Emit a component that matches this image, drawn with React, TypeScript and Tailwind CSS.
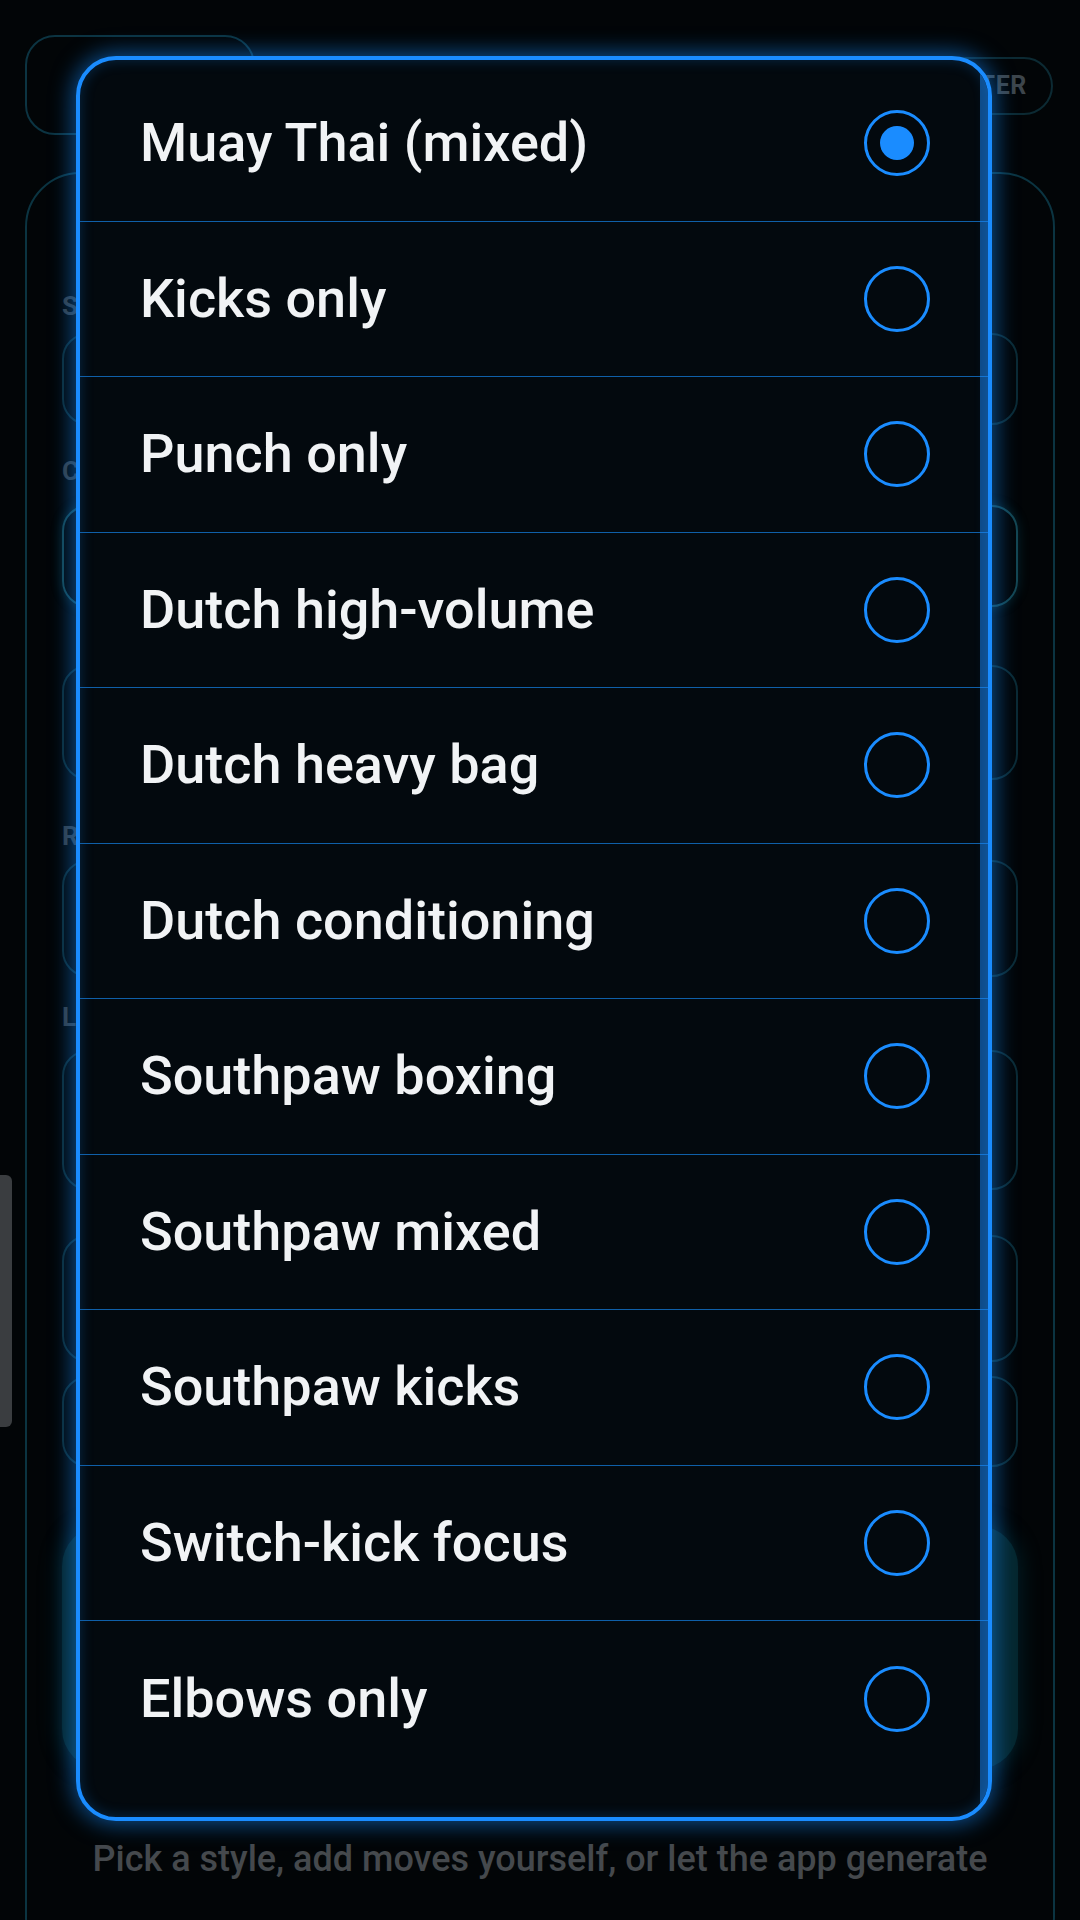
import React from "react";

const STYLES = [
  "Muay Thai (mixed)",
  "Kicks only",
  "Punch only",
  "Dutch high-volume",
  "Dutch heavy bag",
  "Dutch conditioning",
  "Southpaw boxing",
  "Southpaw mixed",
  "Southpaw kicks",
  "Switch-kick focus",
  "Elbows only",
];

function Radio({ checked }: { checked: boolean }) {
  return (
    <span className="flex h-[66px] w-[66px] shrink-0 items-center justify-center rounded-full border-[3px] border-[#1a8cff]">
      {checked && <span className="h-[34px] w-[34px] rounded-full bg-[#1a8cff]" />}
    </span>
  );
}

function Field({ className }: { className: string }) {
  return <div className={`rounded-[26px] border-2 border-[#0b2a34] ${className}`} />;
}

function Label({ text, className }: { text: string; className: string }) {
  return (
    <div className={`h-[30px] text-[26px] font-bold leading-[30px] text-[#343c43] ${className}`}>
      {text}
    </div>
  );
}

export default function App() {
  const selected = 0;

  return (
    <div
      className="relative h-[1920px] w-[1080px] overflow-hidden bg-[#020507]"
      style={{ fontFamily: "Roboto, 'Noto Sans', sans-serif" }}
    >
      {/* dimmed page behind the sheet */}
      <div className="flex items-start justify-between pl-[25px] pr-[27px] pt-[35px]">
        <div className="h-[100px] w-[230px] rounded-[30px] border-2 border-[#0c3442]" />
        <div className="mt-[22px] flex h-[58px] w-[420px] items-center justify-end rounded-full border-2 border-[#0c2a33] pr-[24px] text-[25px] font-bold tracking-wide text-[#3d454b]">
          FILTER
        </div>
      </div>

      <div className="mx-[25px] mt-[37px] h-[1800px] rounded-[55px] border-2 border-[#0b3441] px-[35px] pt-[117px]">
        <Label text="Style" />
        <Field className="mt-[12px] h-[92px]" />
        <Label text="Combo" className="mt-[31px]" />
        <Field className="mt-[19px] h-[102px] border-[#144652] shadow-[0_0_12px_rgba(20,110,130,0.3)]" />
        <Field className="mt-[58px] h-[115px]" />
        <Label text="Rounds" className="mt-[41px]" />
        <Field className="mt-[9px] h-[117px]" />
        <Label text="Length" className="mt-[25px]" />
        <Field className="mt-[18px] h-[140px]" />
        <Field className="mt-[45px] h-[127px]" />
        <Field className="mt-[14px] h-[91px]" />
        <div className="mt-[59px] h-[243px] rounded-[40px] bg-[#05262d] shadow-[0_0_24px_rgba(10,110,130,0.3)]" />
        <p className="mt-[70px] text-center text-[36px] font-medium leading-[40px] text-[#45494d]">
          Pick a style, add moves yourself, or let the app generate
        </p>
      </div>

      {/* page scroll indicator */}
      <div className="absolute left-0 top-[1175px] h-[252px] w-[12px] rounded-r-[6px] bg-[#3a3d40]" />

      {/* style picker sheet */}
      <div className="absolute left-[76px] top-[56px] h-[1765px] w-[916px] overflow-hidden rounded-[40px] border-4 border-[#1a8cff] bg-[#03090e] shadow-[0_0_22px_3px_rgba(20,140,255,0.55),inset_0_0_14px_rgba(20,140,255,0.25)]">
        <ul className="pt-[6px]">
          {STYLES.map((name, i) => (
            <li
              key={name}
              className={`flex h-[155.5px] items-center justify-between pl-[60px] pr-[58px] ${
                i < STYLES.length - 1 ? "border-b-[1.5px] border-[#0f5fa8]" : ""
              }`}
            >
              <span className="text-[54px] font-medium leading-none text-[#f1f3f5]">{name}</span>
              <Radio checked={i === selected} />
            </li>
          ))}
        </ul>
        <div className="absolute right-0 top-0 h-full w-[8px] bg-[#1a8cff]/50" />
      </div>
    </div>
  );
}
